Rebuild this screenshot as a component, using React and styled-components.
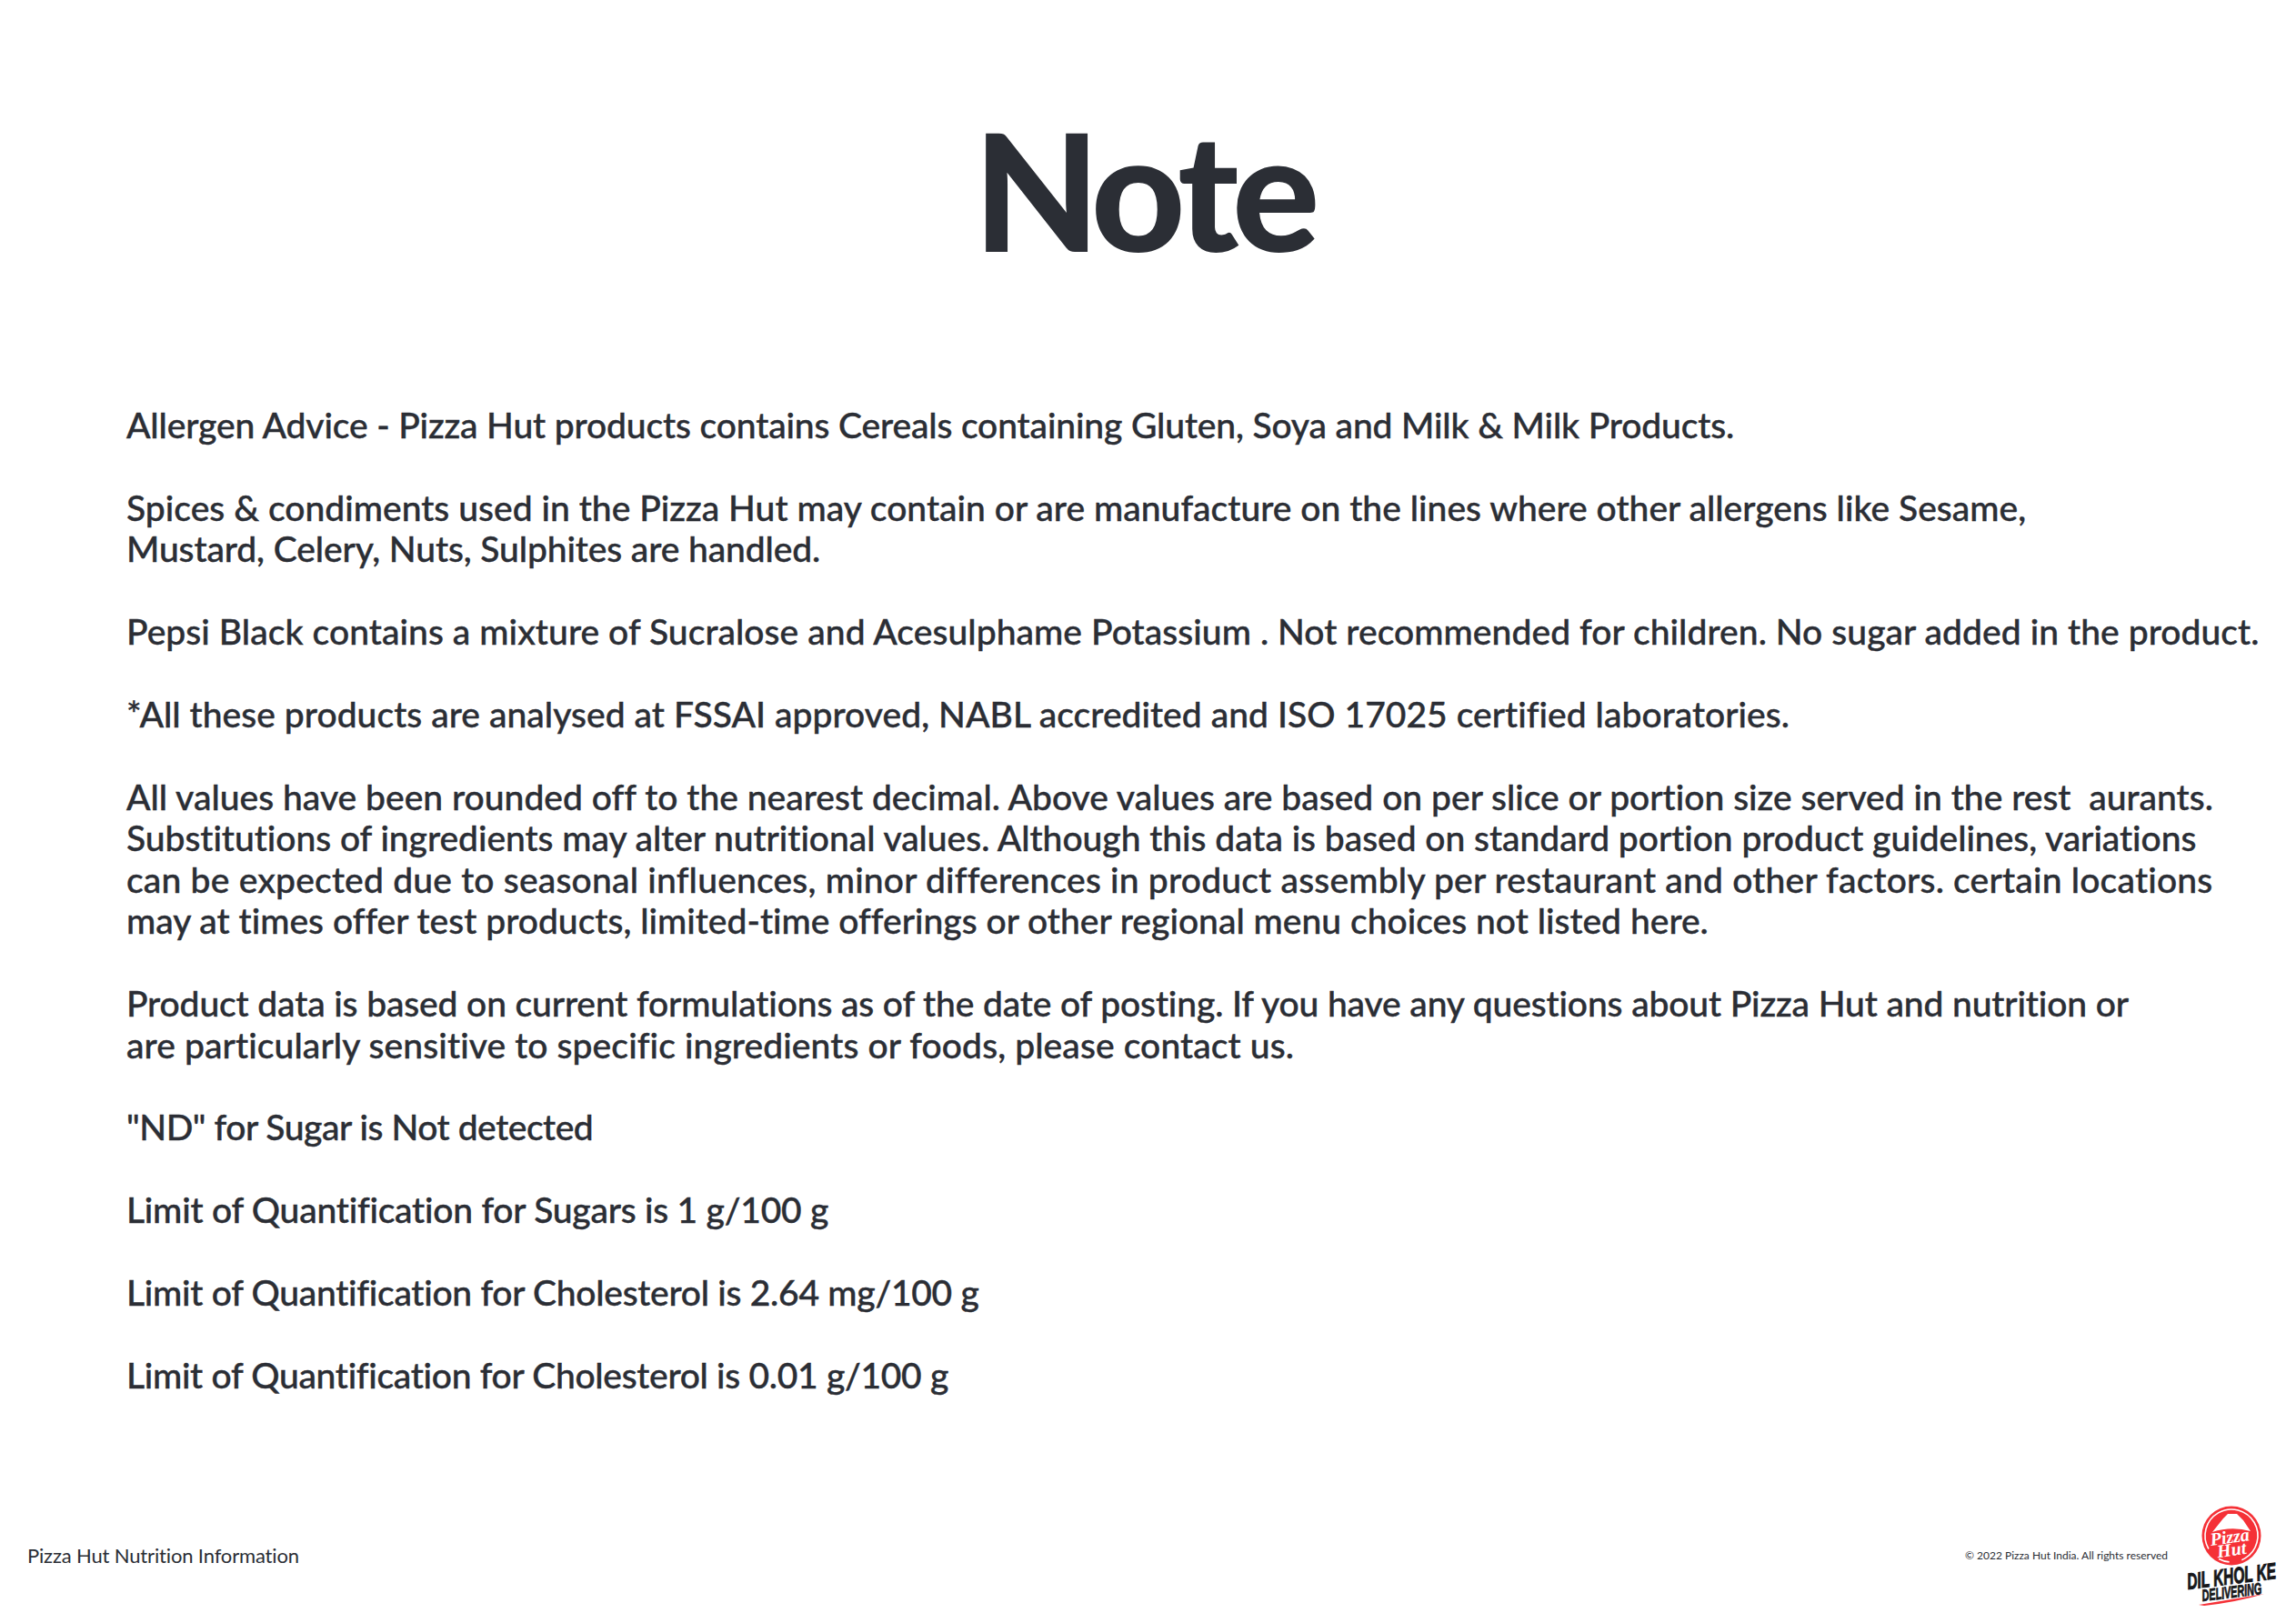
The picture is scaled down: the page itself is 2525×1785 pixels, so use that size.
import styled, { createGlobalStyle } from "styled-components"

const GlobalStyle = createGlobalStyle`
  html, body { margin: 0; background: #fff; }
  body { font-family: "Lato", "Liberation Sans", sans-serif; color: #2b2e35; }
`

const Page = styled.div`
  width: 2525px;
  height: 1785px;
  display: flex;
  flex-direction: column;
  overflow: hidden;
`

const Title = styled.h1`
  margin: 0;
  padding: 100px 10px 0 0;
  height: 300px;
  box-sizing: border-box;
  font-size: 180px;
  line-height: 215px;
  font-weight: 900;
  letter-spacing: -7px;
  text-align: center;
`

const Notes = styled.div`
  padding: 145px 0 0 139px;
  font-size: 39px;
  line-height: 45.44px;
  font-weight: 500;
  -webkit-text-stroke: 0.4px #2b2e35;
`

const Para = styled.p`
  margin: 0 0 45.44px;
`

const Line = styled.span`
  display: block;
  white-space: pre;
  letter-spacing: ${(p) => p.$track}px;
`

const Footer = styled.footer`
  margin-top: auto;
  display: flex;
  align-items: center;
  padding: 0 15px 9px 30px;
`

const FooterTitle = styled.div`
  font-size: 22px;
  line-height: 26px;
  letter-spacing: -0.15px;
`

const Copyright = styled.div`
  margin-left: auto;
  margin-right: 16px;
  font-size: 12px;
  line-height: 14px;
`

const Logo = () => (
  <svg width="110" height="130" viewBox="0 0 110 130">
    <circle cx="54" cy="43" r="32.5" fill="#f53137" />
    <circle cx="54" cy="43" r="29" fill="none" stroke="#fff" strokeWidth="1.6" strokeDasharray="140 14 12 16" transform="rotate(150 54 43)" />
    <path d="M33 39 L45 24 L50 19 L60 19 L67 26 L75 38 Q54 32 33 39 Z" fill="#fff" />
    <text textAnchor="middle" fontFamily="Liberation Serif" fontStyle="italic" fontWeight="700" fontSize="20" fill="#fff" transform="translate(53 51) rotate(-8)">Pizza</text>
    <text textAnchor="middle" fontFamily="Liberation Serif" fontStyle="italic" fontWeight="700" fontSize="20" fill="#fff" transform="translate(55 65) rotate(-8)">Hut</text>
    <text textAnchor="middle" fontFamily="Liberation Sans" fontStyle="italic" fontWeight="700" fontSize="25" fill="#16171a" stroke="#16171a" strokeWidth="1" transform="translate(55 96) rotate(-7) scale(0.62 1)">DIL KHOL KE</text>
    <text textAnchor="middle" fontFamily="Liberation Sans" fontStyle="italic" fontWeight="700" fontSize="18" fill="#16171a" stroke="#16171a" strokeWidth="0.8" transform="translate(55 111) rotate(-7) scale(0.6 1)">DELIVERING</text>
    <path d="M18 119 L90 107 Q60 116 24 120 Z" fill="#f53137" />
  </svg>
)

const paragraphs = [
  [["Allergen Advice - Pizza Hut products contains Cereals containing Gluten, Soya and Milk & Milk Products.", -0.14]],
  [
    ["Spices & condiments used in the Pizza Hut may contain or are manufacture on the lines where other allergens like Sesame,", 0.02],
    ["Mustard, Celery, Nuts, Sulphites are handled.", -0.11],
  ],
  [["Pepsi Black contains a mixture of Sucralose and Acesulphame Potassium . Not recommended for children. No sugar added in the product.", 0.06]],
  [["*All these products are analysed at FSSAI approved, NABL accredited and ISO 17025 certified laboratories.", 0.04]],
  [
    ["All values have been rounded off to the nearest decimal. Above values are based on per slice or portion size served in the rest  aurants.", 0.01],
    ["Substitutions of ingredients may alter nutritional values. Although this data is based on standard portion product guidelines, variations", -0.04],
    ["can be expected due to seasonal influences, minor differences in product assembly per restaurant and other factors. certain locations", 0.2],
    ["may at times offer test products, limited-time offerings or other regional menu choices not listed here.", 0.01],
  ],
  [
    ["Product data is based on current formulations as of the date of posting. If you have any questions about Pizza Hut and nutrition or", -0.13],
    ["are particularly sensitive to specific ingredients or foods, please contact us.", 0.1],
  ],
  [['"ND" for Sugar is Not detected', -0.45]],
  [["Limit of Quantification for Sugars is 1 g/100 g", -0.23]],
  [["Limit of Quantification for Cholesterol is 2.64 mg/100 g", -0.27]],
  [["Limit of Quantification for Cholesterol is 0.01 g/100 g", -0.3]],
]

export default function App() {
  return (
    <Page>
      <GlobalStyle />
      <Title>Note</Title>
      <Notes>
        {paragraphs.map((lines, i) => (
          <Para key={i}>
            {lines.map(([text, track], j) => (
              <Line key={j} $track={track}>{text}</Line>
            ))}
          </Para>
        ))}
      </Notes>
      <Footer>
        <FooterTitle>Pizza Hut Nutrition Information</FooterTitle>
        <Copyright>© 2022 Pizza Hut India. All rights reserved</Copyright>
        <Logo />
      </Footer>
    </Page>
  )
}
